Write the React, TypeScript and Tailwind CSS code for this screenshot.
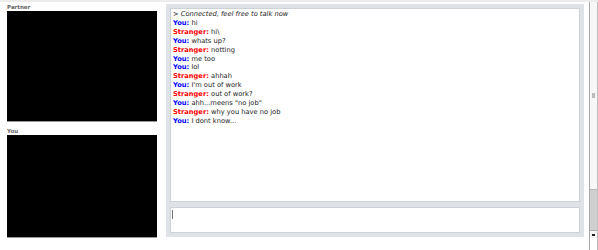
const lines: { who: "You" | "Stranger"; text: string }[] = [
  { who: "You", text: "hi" },
  { who: "Stranger", text: "hi\\" },
  { who: "You", text: "whats up?" },
  { who: "Stranger", text: "notting" },
  { who: "You", text: "me too" },
  { who: "You", text: "lol" },
  { who: "Stranger", text: "ahhah" },
  { who: "You", text: "I'm out of work" },
  { who: "Stranger", text: "out of work?" },
  { who: "You", text: 'ahh...meens "no job"' },
  { who: "Stranger", text: "why you have no job" },
  { who: "You", text: "I dont know..." },
]

function VideoBox({ label, height }: { label: string; height: string }) {
  return (
    <div className="flex flex-col">
      <div className="text-[5.5px] leading-[7px] font-bold text-[#666] h-[7px]">{label}</div>
      <div className={`w-[150px] ${height} bg-black border-b border-[#999]`} />
    </div>
  )
}

export default function App() {
  return (
    <div
      className="w-[598px] h-[250px] bg-white flex border-t-2 border-[#ececec] overflow-hidden"
      style={{ fontFamily: '"DejaVu Sans", Verdana, sans-serif' }}
    >
      <div className="flex flex-col gap-[6px] pl-[7px] pt-[2px]">
        <VideoBox label="Partner" height="h-[111px]" />
        <VideoBox label="You" height="h-[103px]" />
      </div>

      <div className="ml-[9px] mt-[2px] w-[418px] h-[233px] bg-[#dfe3e8] p-[4px] flex flex-col gap-[5px]">
        <div className="h-[194px] bg-white border border-[#cdd2d8] px-[2px] pt-[1px] text-[6.7px] leading-[8.9px] text-[#222]">
          <div className="italic">&gt; Connected, feel free to talk now</div>
          {lines.map((l, i) => (
            <div key={i}>
              <span className={l.who === "You" ? "font-bold text-[#0000ff]" : "font-bold text-[#ff0000]"}>
                {l.who}:
              </span>{" "}
              {l.text}
            </div>
          ))}
        </div>
        <div className="h-[26px] bg-white border border-[#cdd2d8] pl-[1px] pt-[2px]">
          <div className="w-px h-[9px] bg-[#777]" />
        </div>
      </div>

      <div className="ml-auto w-[9px] h-full border-l border-[#a8a8a8] border-r border-r-[#bdbdbd] bg-[#e6e6e6] flex flex-col">
        <div className="h-[188px] bg-[#f7f7f7] border-b border-[#bbb] flex items-center justify-center">
          <div className="w-[3px] h-[5px] bg-[#bbb]" />
        </div>
        <div className="h-[40px] bg-[#cfcfcf]" />
        <div className="h-[8px] bg-[#f4f4f4] border-t border-[#aaa] flex items-center justify-center">
          <div className="w-[3px] h-[2px] bg-[#222]" />
        </div>
        <div className="flex-1 bg-white" />
      </div>
    </div>
  )
}
